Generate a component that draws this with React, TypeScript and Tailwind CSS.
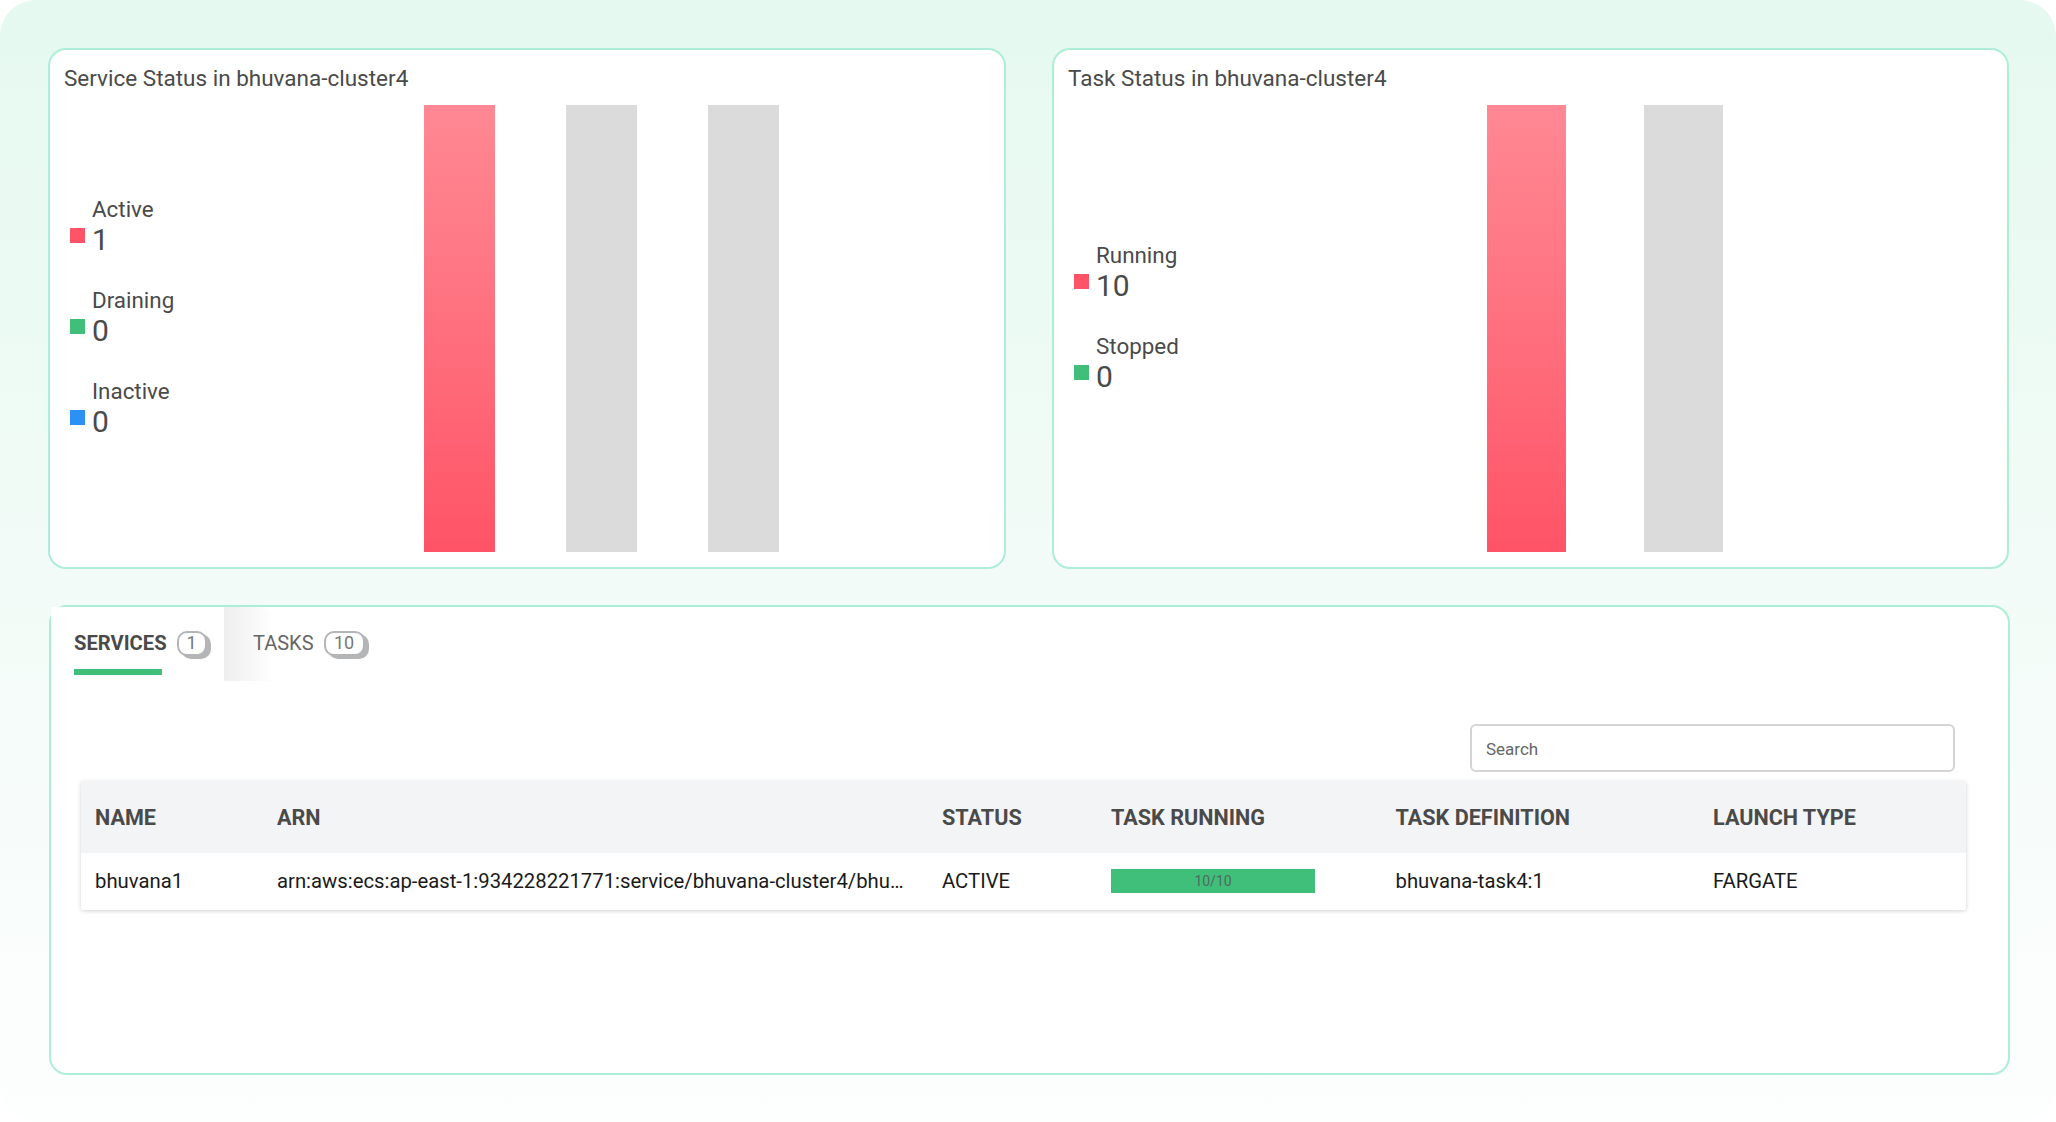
const font = { fontFamily: 'Roboto, "Liberation Sans", sans-serif' };

function Legend({ color, label, value }: { color: string; label: string; value: string }) {
  return (
    <div className="flex h-[61px] items-end">
      <span className={`mb-[13px] h-[15px] w-[15px] ${color}`} />
      <div className="ml-[7px] flex flex-col">
        <span className="text-[22.4px] leading-[29px] text-[#4a4a4a]">{label}</span>
        <span className="text-[30px] leading-[32px] text-[#4a4a4a]">{value}</span>
      </div>
    </div>
  );
}

function Card({
  title,
  legend,
  legendTop,
  barsMargin,
  barWidth,
  barGap,
  bars,
}: {
  title: string;
  legend: { color: string; label: string; value: string }[];
  legendTop: string;
  barsMargin: string;
  barWidth: string;
  barGap: string;
  bars: string[];
}) {
  return (
    <section className="flex h-[521px] flex-col rounded-[18px] border-2 border-[#aeeed7] bg-white pl-[14px]">
      <h2 className="mt-[14px] text-[22.5px] leading-[29px] font-normal text-[#4a4a4a]">{title}</h2>
      <div className="mt-[12px] flex h-[447px]">
        <div className={`ml-[6px] flex w-[150px] shrink-0 flex-col gap-[30px] ${legendTop}`}>
          {legend.map((item) => (
            <Legend key={item.label} {...item} />
          ))}
        </div>
        <div className={`flex h-full ${barsMargin} ${barGap}`}>
          {bars.map((bar, index) => (
            <div key={index} className={`h-full ${barWidth} ${bar}`} />
          ))}
        </div>
      </div>
    </section>
  );
}

function Badge({ children, wide }: { children: string; wide?: boolean }) {
  return (
    <span
      className={`ml-[10px] flex h-[25px] items-center justify-center rounded-[10px] border-2 border-[#b4b5b7] bg-white text-[18px] leading-none font-normal text-[#777] shadow-[4px_3px_0_0_#b4b5b7] ${
        wide ? 'w-[41px]' : 'w-[30px]'
      }`}
    >
      {children}
    </span>
  );
}

const columns = ['w-[182px]', 'w-[665px]', 'w-[169px]', 'w-[284.5px]', 'w-[317.5px]', 'w-[255px]'];

function Cell({ index, children, head }: { index: number; children: React.ReactNode; head?: boolean }) {
  return (
    <div
      className={`${columns[index]} shrink-0 ${
        head ? 'text-[21.6px] font-bold text-[#4a4a4a]' : 'text-[20.3px] text-[#1a1a1a]'
      }`}
    >
      {children}
    </div>
  );
}

const RED = 'bg-gradient-to-b from-[#ff8894] to-[#ff5367]';
const GREY = 'bg-[#dbdbdb]';

export default function App() {
  return (
    <div className="h-[1122px] w-[2056px] overflow-hidden bg-white" style={font}>
      <div className="flex h-full flex-col rounded-[36px] bg-gradient-to-b from-[#e5f9f0] via-[#f2fbf7] to-[#fdfefe] px-[48px] pt-[48px]">
        <div className="flex w-[1961px] gap-[46px]">
          <div className="w-[958px]">
            <Card
              title="Service Status in bhuvana-cluster4"
              legendTop="pt-[90px]"
              barsMargin="ml-[204px]"
              barWidth="w-[71px]"
              barGap="gap-[71px]"
              bars={[RED, GREY, GREY]}
              legend={[
                { color: 'bg-[#ff5468]', label: 'Active', value: '1' },
                { color: 'bg-[#3fbf79]', label: 'Draining', value: '0' },
                { color: 'bg-[#2c91f5]', label: 'Inactive', value: '0' },
              ]}
            />
          </div>
          <div className="w-[957px]">
            <Card
              title="Task Status in bhuvana-cluster4"
              legendTop="pt-[136px]"
              barsMargin="ml-[263px]"
              barWidth="w-[79px]"
              barGap="gap-[78px]"
              bars={[RED, GREY]}
              legend={[
                { color: 'bg-[#ff5468]', label: 'Running', value: '10' },
                { color: 'bg-[#3fbf79]', label: 'Stopped', value: '0' },
              ]}
            />
          </div>
        </div>

        <section className="mt-[36px] ml-[1px] h-[470px] w-[1961px] rounded-[18px] border-2 border-[#aeeed7] bg-white">
          <div className="flex h-[74px]">
            <div className="z-10 flex h-full w-[173px] flex-col rounded-tr-[14px] bg-white pl-[23px]">
              <div className="flex h-[62px] items-center pt-[10px]">
                <span className="text-[20.2px] font-bold text-[#4a4a4a]">SERVICES</span>
                <Badge>1</Badge>
              </div>
              <div className="h-[6px] w-[88px] bg-[#3fbf79]" />
            </div>
            <div className="relative flex h-full items-start pl-[29px]">
              <div className="absolute top-0 left-0 h-full w-[50px] rounded-tr-[14px] bg-gradient-to-r from-[#eeeeee] to-white" />
              <div className="relative flex h-[62px] items-center pt-[10px]">
                <span className="text-[20px] text-[#666]">TASKS</span>
                <Badge wide>10</Badge>
              </div>
            </div>
          </div>

          <div className="mt-[43px] flex justify-end pr-[53px]">
            <div className="flex h-[48px] w-[485px] items-center rounded-[6px] border-2 border-[#d4d4d4] bg-white pt-[3px] pl-[14px] text-[17px] text-[#666]">
              Search
            </div>
          </div>

          <div className="mt-[9px] ml-[30px] w-[1885px] rounded-[3px] bg-white shadow-[0_1px_4px_rgba(0,0,0,0.18)]">
            <div className="flex h-[72px] items-center bg-[#f3f4f6] pt-[2px] pl-[14px]">
              {['NAME', 'ARN', 'STATUS', 'TASK RUNNING', 'TASK DEFINITION', 'LAUNCH TYPE'].map((h, i) => (
                <Cell key={h} index={i} head>
                  {h}
                </Cell>
              ))}
            </div>
            <div className="flex h-[57px] items-center pb-[1px] pl-[14px]">
              <Cell index={0}>bhuvana1</Cell>
              <Cell index={1}>
                <div className="w-[634px] truncate">
                  arn:aws:ecs:ap-east-1:934228221771:service/bhuvana-cluster4/bhuvana1
                </div>
              </Cell>
              <Cell index={2}>ACTIVE</Cell>
              <Cell index={3}>
                <div className="flex h-[24px] w-[204px] items-center justify-center bg-[#3fbf79] text-[14px] text-[#4f6b60]">
                  10/10
                </div>
              </Cell>
              <Cell index={4}>bhuvana-task4:1</Cell>
              <Cell index={5}>FARGATE</Cell>
            </div>
          </div>
        </section>
      </div>
    </div>
  );
}
